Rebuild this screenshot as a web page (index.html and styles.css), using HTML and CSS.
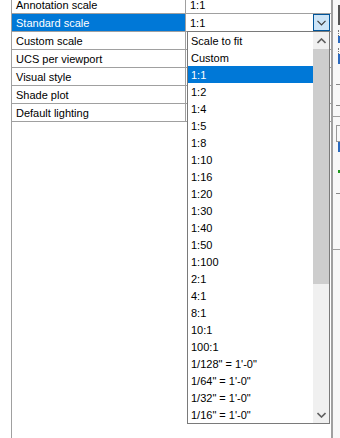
FILE: index.html
```html
<!DOCTYPE html>
<html lang="en">
<head>
  <meta charset="UTF-8">
  <title>Properties - Standard scale</title>
  <meta name="viewport" content="width=device-width, initial-scale=1.0">
  <link rel="stylesheet" href="styles.css">
</head>
<body>
  <div class="sheet">
    <div class="grid">
      <div class="row"><div class="name">Annotation scale</div><div class="value">1:1</div></div>
      <div class="row active">
        <div class="name">Standard scale</div>
        <div class="value combo">
          <span>1:1</span>
          <span class="drop-btn">
            <svg width="9" height="6" viewBox="0 0 9 6"><path d="M0.5 0.8 L4.5 4.8 L8.5 0.8" fill="none" stroke="#3c3c3c" stroke-width="1.2"/></svg>
          </span>
        </div>
      </div>
      <div class="row"><div class="name">Custom scale</div><div class="value"></div></div>
      <div class="row"><div class="name">UCS per viewport</div><div class="value"></div></div>
      <div class="row"><div class="name">Visual style</div><div class="value"></div></div>
      <div class="row"><div class="name">Shade plot</div><div class="value"></div></div>
      <div class="row"><div class="name">Default lighting</div><div class="value"></div></div>
    </div>

    <div class="list">
      <ul class="items">
        <li>Scale to fit</li>
        <li>Custom</li>
        <li class="selected">1:1</li>
        <li>1:2</li>
        <li>1:4</li>
        <li>1:5</li>
        <li>1:8</li>
        <li>1:10</li>
        <li>1:16</li>
        <li>1:20</li>
        <li>1:30</li>
        <li>1:40</li>
        <li>1:50</li>
        <li>1:100</li>
        <li>2:1</li>
        <li>4:1</li>
        <li>8:1</li>
        <li>10:1</li>
        <li>100:1</li>
        <li>1/128" = 1'-0"</li>
        <li>1/64" = 1'-0"</li>
        <li>1/32" = 1'-0"</li>
        <li>1/16" = 1'-0"</li>
      </ul>
      <div class="scrollbar">
        <div class="arrow">
          <svg width="9" height="6" viewBox="0 0 9 6"><path d="M0.5 5 L4.5 1 L8.5 5" fill="none" stroke="#606060" stroke-width="1.6"/></svg>
        </div>
        <div class="track"><div class="thumb"></div></div>
        <div class="arrow">
          <svg width="9" height="6" viewBox="0 0 9 6"><path d="M0.5 1 L4.5 5 L8.5 1" fill="none" stroke="#606060" stroke-width="1.6"/></svg>
        </div>
      </div>
    </div>
  </div>

  <div class="side">
    <div class="mark dark"></div>
    <div class="mark dots"></div>
    <div class="mark blue"></div>
    <div class="mark dots"></div>
    <div class="mark blue tall"></div>
    <div class="mark dash"></div>
    <div class="mark dash"></div>
    <div class="rule"></div>
    <div class="mark box"></div>
    <div class="mark blue tall"></div>
    <div class="mark green"></div>
    <div class="mark dash"></div>
    <div class="rule low"></div>
  </div>
</body>
</html>
```

FILE: styles.css
```css
html, body {
  margin: 0;
  padding: 0;
}
body {
  width: 340px;
  height: 438px;
  overflow: hidden;
  display: flex;
  background-color: #fff;
  font-family: "Liberation Sans", Arial, sans-serif;
  font-size: 11px;
  color: #000;
}
.sheet {
  position: relative;
  margin-left: 11px;
  width: 319px;
  border-left: 1px solid #a0a0a0;
  border-right: 2px solid #a0a0a0;
}
.grid {
  margin-top: -4px;
}
.row {
  display: grid;
  grid-template-columns: 174px 1fr;
  grid-template-rows: 17px;
  height: 18px;
  box-sizing: border-box;
  border-bottom: 1px solid #a0a0a0;
}
.name {
  padding-left: 4px;
  line-height: 19px;
  border-right: 1px solid #a0a0a0;
  white-space: nowrap;
}
.value {
  padding-left: 4px;
  line-height: 19px;
}
.active .name {
  background-color: #0078d7;
  color: #fff;
}
.combo {
  display: flex;
  justify-content: space-between;
  align-items: center;
  line-height: 17px;
}
.combo span:first-child {
  padding-top: 2px;
}
.drop-btn {
  width: 15px;
  height: 15px;
  margin-right: 1px;
  display: flex;
  align-items: center;
  justify-content: center;
  background-color: #cce4f7;
  border: 1px solid #005499;
}
.list {
  position: absolute;
  left: 175px;
  top: 31px;
  width: 141px;
  height: 391px;
  display: flex;
  background-color: #fff;
  border: 1px solid #7a7a7a;
}
.items {
  list-style: none;
  margin: 0;
  padding: 0;
  flex: 1;
}
.items li {
  height: 17px;
  line-height: 18px;
  padding-left: 3px;
  white-space: nowrap;
  overflow: hidden;
}
.items li.selected {
  background-color: #0078d7;
  color: #fff;
}
.scrollbar {
  width: 16px;
  display: flex;
  flex-direction: column;
  background-color: #f0f0f0;
}
.arrow {
  height: 17px;
  display: flex;
  align-items: center;
  justify-content: center;
}
.track {
  flex: 1;
}
.thumb {
  height: 235px;
  background-color: #cdcdcd;
}
.side {
  flex: 1;
  background-color: #f8f8f8;
  display: flex;
  flex-direction: column;
  align-items: flex-end;
  padding-top: 5px;
}
.mark {
  width: 2px;
}
.mark.dark {
  height: 20px;
  background-color: #555;
}
.mark.dots {
  height: 6px;
  margin-top: 5px;
  border-left: 1px dotted #777;
  width: 1px;
}
.mark.blue {
  height: 7px;
  background-color: #2c6bbf;
}
.mark.blue.tall {
  height: 10px;
}
.mark.dash {
  width: 4px;
  height: 1px;
  margin-top: 20px;
  background-color: #888;
}
.rule {
  width: 100%;
  height: 1px;
  margin-top: 10px;
  background-color: #a0a0a0;
}
.rule.low {
  margin-top: 55px;
}
.mark.box {
  width: 3px;
  height: 15px;
  margin-top: 8px;
  border: 1px solid #999;
  border-right: none;
}
.mark.green {
  height: 3px;
  margin-top: 18px;
  background-color: #1f9a1f;
}
```
